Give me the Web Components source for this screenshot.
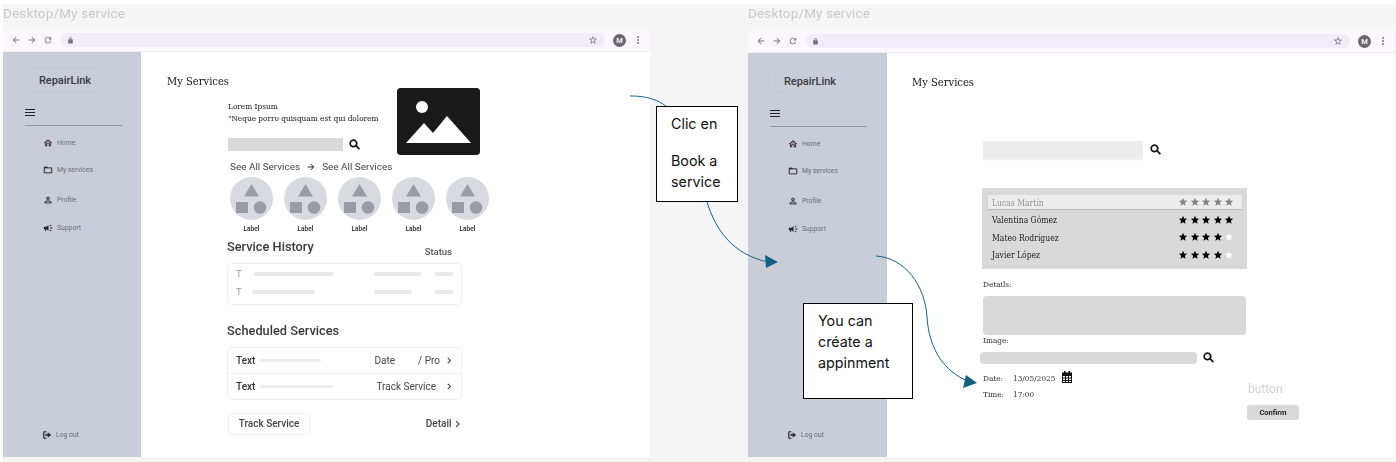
<!DOCTYPE html>
<html lang="en">
<head>
<meta charset="utf-8">
<title>Desktop/My service</title>
<style>
  html { background: #fff; }
  body { margin: 0; height: 462px; overflow: hidden; font-family: Roboto, sans-serif; }
</style>
</head>
<body>
<wire-board>
  <wire-window heading="Desktop/My service" style="--head-h:25px">
    <side-nav slot="nav"></side-nav>
    <services-home></services-home>
  </wire-window>
  <wire-window heading="Desktop/My service" style="--head-h:26px;--nav-w:139px">
    <side-nav slot="nav"></side-nav>
    <services-book></services-book>
  </wire-window>
  <note-box style="left:653px;top:102px;width:80px;height:94px;--pad-l:14px">
    <p style="margin-top:6px">Clic en</p>
    <p style="margin-top:16px">Book a<br>service</p>
  </note-box>
  <note-box style="left:800px;top:299px;width:108px;height:94px;--pad-l:14px">
    <p style="margin-top:6px">You can<br>créate a<br>appinment</p>
  </note-box>
</wire-board>

<script>
const ICONS = {
  search: 'M10 2.500a7.500 7.500 0 1 0 4.400 13.600l5.600 5.600 2.200-2.200-5.600-5.600A7.500 7.500 0 0 0 10 2.500zm0 3a4.500 4.500 0 1 1 0 9 4.500 4.500 0 0 1 0-9z',
  star: 'M12 17.270 18.180 21l-1.640-7.030L22 9.240l-7.190-.61L12 2 9.190 8.630 2 9.240l5.460 4.730L5.820 21z',
  home: 'M12 3 2 12h3v8h5v-5a2 2 0 0 1 4 0v5h5v-8h3zM7 18v-7.200l5-4.500 5 4.500V18h-1v-3a4 4 0 0 0-8 0v3z',
  folder: 'M20 6h-8l-2-2H4c-1.100 0-1.990.9-1.990 2L2 18c0 1.100.9 2 2 2h16c1.100 0 2-.9 2-2V8c0-1.100-.9-2-2-2zm0 12H4V8h16v10z',
  person: 'M12 5.900c1.160 0 2.100.94 2.100 2.100s-.94 2.100-2.100 2.100S9.900 9.160 9.900 8s.94-2.100 2.100-2.100m0 9c2.970 0 6.100 1.460 6.100 2.100v1.100H5.900V17c0-.64 3.130-2.100 6.100-2.100M12 4C9.790 4 8 5.790 8 8s1.790 4 4 4 4-1.790 4-4-1.790-4-4-4zm0 9c-2.670 0-8 1.340-8 4v3h16v-3c0-2.660-5.330-4-8-4z',
  horn: 'M18 11v2h4v-2h-4zm-2 6.610c.96.71 2.210 1.650 3.200 2.390.4-.53.8-1.070 1.200-1.600-.99-.74-2.240-1.680-3.200-2.400-.4.54-.8 1.080-1.200 1.610zM20.400 5.600c-.4-.53-.8-1.070-1.200-1.600-.99.74-2.240 1.680-3.200 2.400.4.53.8 1.070 1.200 1.600.96-.72 2.210-1.650 3.200-2.400zM4 9c-1.100 0-2 .9-2 2v2c0 1.100.9 2 2 2h1v4h2v-4h1l5 3V6L8 9H4z',
  logout: 'M10 3H6a3 3 0 0 0-3 3v12a3 3 0 0 0 3 3h4v-2.400H6.400a1 1 0 0 1-1-1V6.400a1 1 0 0 1 1-1H10zM14 6v4H8v4h6v4l8-6z',
  chevron: 'M9 5.500 7.500 7l5 5-5 5L9 18.500l6.500-6.500z',
  arrow: 'M12 4l-1.410 1.410L16.170 11H4v2h12.170l-5.580 5.590L12 20l8-8z',
  back: 'M20 11H7.830l5.590-5.590L12 4l-8 8 8 8 1.410-1.410L7.830 13H20z',
  reload: 'M17.650 6.350A7.960 7.960 0 0 0 12 4a8 8 0 1 0 7.730 10h-2.080A6 6 0 1 1 12 6c1.660 0 3.140.69 4.220 1.780L13 11h7V4z',
  lock: 'M18 8h-1V6a5 5 0 0 0-10 0v2H6a2 2 0 0 0-2 2v10a2 2 0 0 0 2 2h12a2 2 0 0 0 2-2V10a2 2 0 0 0-2-2zM9 6a3 3 0 0 1 6 0v2H9z',
  starLine: 'M22 9.240l-7.190-.62L12 2 9.190 8.630 2 9.240l5.460 4.730L5.820 21 12 17.270 18.180 21l-1.630-7.030zM12 15.400l-3.760 2.270 1-4.280-3.320-2.880 4.380-.38L12 6.100l1.710 4.040 4.380.38-3.320 2.880 1 4.280z'
}

const SLAB = 'font-family:"DejaVu Serif",serif;font-stretch:condensed'

const icon = (name, size, color = 'currentColor') =>
  `<svg width="${size}" height="${size}" viewBox="0 0 24 24" fill="${color}" style="display:block;flex:none"><path d="${ICONS[name]}"/></svg>`

class ElementBase extends HTMLElement {
  constructor() {
    super()
    this.attachShadow({ mode: 'open' })
  }
  render(html) {
    this.shadowRoot.innerHTML = html
  }
}

class WireBoard extends ElementBase {
  connectedCallback() {
    this.render(`
      <style>
        :host { display: block; position: relative; margin: 4px 0 0 3px; height: 458px; background: #f5f5f5; }
        .windows { display: flex; gap: 98px; }
        svg { position: absolute; left: -3px; top: -4px; pointer-events: none; }
      </style>
      <div class="windows"><slot></slot></div>
      <svg width="1396" height="462" fill="none" stroke="#156082" stroke-width="1">
        <path d="M630 96C652 96 690 100 704 190C713 232 735 255 768 262"/>
        <path d="M876 256C905 258 925 285 927 317C929 350 945 372 968 381"/>
        <path d="M778 262 765 255 766 268z" fill="#156082" stroke="none"/>
        <path d="M977 383 966 375 963 388z" fill="#156082" stroke="none"/>
      </svg>
      <slot name="over"></slot>`)
    // notes lie over the windows, so they move to the named slot
    this.querySelectorAll('note-box').forEach(n => n.slot = 'over')
  }
}

class WireWindow extends ElementBase {
  connectedCallback() {
    this.render(`
      <style>
        :host { display: block; width: 647px; filter: blur(.35px); }
        .head { height: var(--head-h); padding-top: 1px; box-sizing: border-box; font: 13.500px/17px Roboto, sans-serif; color: #c9c9c9; letter-spacing: .15px; }
        .body { display: flex; height: calc(430px - var(--head-h)); background: #fff; }
        .main { flex: 1; min-width: 0; }
      </style>
      <div class="head">${this.getAttribute('heading')}</div>
      <browser-bar></browser-bar>
      <div class="body">
        <slot name="nav"></slot>
        <div class="main"><slot></slot></div>
      </div>`)
  }
}

class BrowserBar extends ElementBase {
  connectedCallback() {
    this.render(`
      <style>
        :host { display: flex; align-items: center; height: 23px; box-sizing: border-box; padding-left: 8px; background: #fcf6fd; border-bottom: 1px solid #efecef; color: #77737b; }
        .nav { display: flex; gap: 6px; }
        .url { display: flex; align-items: center; width: 544px; height: 14px; margin-left: 8px; padding-left: 6px; box-sizing: border-box; background: #f1ecf8; border-radius: 7px; }
        .url svg:last-child { margin-left: auto; margin-right: 7px; }
        .me { width: 13px; height: 13px; margin-left: 8px; border-radius: 50%; background: #6b6670; color: #fff; font: 500 7.500px/13px Roboto, sans-serif; text-align: center; }
        .dots { display: grid; gap: 1px; margin-left: 11px; }
        .dots i { width: 2px; height: 2px; border-radius: 50%; background: #77737b; }
      </style>
      <div class="nav">${icon('back', 10)}${icon('arrow', 10)}${icon('reload', 10)}</div>
      <div class="url">${icon('lock', 7)}${icon('starLine', 10)}</div>
      <div class="me">M</div>
      <div class="dots"><i></i><i></i><i></i></div>`)
  }
}

class SideNav extends ElementBase {
  connectedCallback() {
    const item = (ic, label, top, left = 40, color = '#2c2c30') =>
      `<div class="item" style="margin-top:${top}px;padding-left:${left}px">${icon(ic, 10, color)}<span>${label}</span></div>`
    this.render(`
      <style>
        :host { display: flex; flex-direction: column; flex: none; width: var(--nav-w, 138px); height: 100%; background: #c8cdd7; color: #6a6d75; }
        .brand { width: 70px; height: 25px; margin: 16px 0 0 27px; box-sizing: border-box; border: 1px solid #c5cad4; border-radius: 5px; font: 500 11px/23px Roboto, sans-serif; color: #383b41; text-align: center; }
        .burger { display: grid; gap: 2px; width: 10px; margin: 16px 0 0 22px; }
        .burger i { height: 1px; background: #222; }
        hr { width: 97px; margin: 9px 0 0 22px; border: 0; border-top: 1px solid #9499a2; }
        .item { display: flex; align-items: center; gap: 4px; height: 12px; font: 6.800px/12px Roboto, sans-serif; }
        svg { stroke: currentColor; stroke-width: .4; color: #2c2c30; }
      </style>
      <div class="brand">RepairLink</div>
      <div class="burger"><i></i><i></i><i></i></div>
      <hr>
      ${item('home', 'Home', 11, 40, '#4a3035')}
      ${item('folder', 'My services', 15)}
      ${item('person', 'Profile', 18)}
      ${item('horn', 'Support', 16)}
      <div style="margin-top:auto;margin-bottom:16px">${item('logout', 'Log out', 0, 39)}</div>`)
  }
}

class ShapeTile extends ElementBase {
  connectedCallback() {
    this.render(`
      <style>
        :host { display: block; width: 43px; }
        svg { display: block; }
        div { margin-top: 4px; font: 500 6.500px/10px Roboto, sans-serif; color: #222; text-align: center; }
      </style>
      <svg width="43" height="43" viewBox="0 0 43 43">
        <circle cx="21.500" cy="21.500" r="21.500" fill="#d9dadf"/>
        <path d="M21.500 7 29 19.500H14z" fill="#989da5"/>
        <rect x="6" y="25" width="12" height="11" fill="#989da5"/>
        <circle cx="30" cy="30.500" r="6.300" fill="#989da5"/>
      </svg>
      <div>Label</div>`)
  }
}

class HistoryRow extends ElementBase {
  connectedCallback() {
    const [gap, a, b] = this.getAttribute('bars').split(',')
    this.render(`
      <style>
        :host { display: grid; grid-template-columns: 138px 61px 18px; align-items: center; height: 18px; padding-left: 8px; }
        .t { font: 9.500px/18px Roboto, sans-serif; color: #9a9a9a; display: flex; align-items: center; }
        i { display: block; height: 4px; border-radius: 2px; background: #e8e8e8; }
      </style>
      <div class="t"><span style="width:${gap}px">T</span><i style="width:${a}px"></i></div>
      <i style="width:${b}px"></i>
      <i></i>`)
  }
}

class ScheduledRow extends ElementBase {
  connectedCallback() {
    this.render(`
      <style>
        :host { display: flex; align-items: center; height: 25px; padding: 0 6px 0 8px; font: 10px/14px Roboto, sans-serif; color: #444; }
        :host(:not(:last-child)) { border-bottom: 1px solid #f1f1f1; }
        i { display: block; height: 3px; margin-left: 5px; border-radius: 2px; background: #ececec; }
        .end { margin-left: auto; display: flex; align-items: center; }
      </style>
      <span style="color:#333;font-weight:500">Text</span>
      <i style="width:${this.getAttribute('bar')}px"></i>
      <div class="end"><slot></slot>${icon('chevron', 11, '#333')}</div>`)
  }
}

class ListCard extends ElementBase {
  connectedCallback() {
    this.render(`
      <style>
        :host { display: block; box-sizing: border-box; width: 235px; border: 1px solid #f0f0f0; border-radius: 5px; padding: var(--pad, 0); }
      </style>
      <slot></slot>`)
  }
}

class ScreenTitle extends ElementBase {
  connectedCallback() {
    this.render(`
      <style>
        :host { display: block; margin: 23px 0 0 26px; font-size: 11.100px; line-height: 13px; ${SLAB}; color: #111; }
      </style>
      <slot></slot>`)
  }
}

class ServicesHome extends ElementBase {
  connectedCallback() {
    this.render(`
      <style>
        :host { display: block; }
        .content { padding-left: 86px; }
        .hero { display: flex; margin-left: 1px; }
        .copy { width: 169px; padding-top: 12px; box-sizing: border-box; font-size: 8.200px; line-height: 12px; ${SLAB}; color: #111; white-space: nowrap; }
        .find { display: flex; align-items: center; gap: 5px; margin-top: 14px; }
        .find i { width: 115px; height: 13px; background: #d9d9d9; }
        .pic { display: block; border-radius: 3px; }
        .see { display: flex; align-items: center; gap: 6px; height: 14px; margin: 5px 0 0 3px; font: 9.950px/14px Roboto, sans-serif; color: #444; }
        .tiles { display: flex; gap: 11px; margin: 3px 0 0 3px; }
        h2 { margin: 0; font: 500 12.800px/16px Roboto, sans-serif; color: #3a3a3a; }
        .hist { display: flex; justify-content: space-between; width: 225px; height: 18px; margin-top: 5px; }
        .hist span { margin-top: 7px; font: 500 9.500px/12px Roboto, sans-serif; color: #555; }
        .gap { margin-top: 6px; --pad: 1px 0 3px; }
        .foot { display: flex; justify-content: space-between; align-items: center; width: 235.500px; margin: 13px 0 0 1px; font: 500 10px/14px Roboto, sans-serif; color: #444; }
        .foot .btn { width: 82px; height: 22px; box-sizing: border-box; border: 1px solid #f0f0f0; border-radius: 5px; line-height: 20px; text-align: center; }
        .foot .more { display: flex; align-items: center; }
      </style>
      <screen-title>My Services</screen-title>
      <div class="content">
        <div class="hero">
          <div class="copy">
            Lorem Ipsum<br>"Neque porro quisquam est qui dolorem
            <div class="find"><i></i>${icon('search', 13, '#111')}</div>
          </div>
          <svg class="pic" width="83" height="67" viewBox="0 0 83 67">
            <rect width="83" height="67" rx="3" fill="#1a1a1a"/>
            <circle cx="25" cy="19" r="6" fill="#fff"/>
            <path d="M9 55 27 35 36 45 50 28 74 55z" fill="#fff"/>
          </svg>
        </div>
        <div class="see">See All Services ${icon('arrow', 10, '#333')} See All Services</div>
        <div class="tiles">
          <shape-tile></shape-tile><shape-tile></shape-tile><shape-tile></shape-tile><shape-tile></shape-tile><shape-tile></shape-tile>
        </div>
        <div class="hist"><h2>Service History</h2><span>Status</span></div>
        <list-card class="gap">
          <history-row bars="18,80,47"></history-row>
          <history-row bars="16,63,38"></history-row>
        </list-card>
        <h2 style="margin-top:18px">Scheduled Services</h2>
        <list-card style="margin-top:8px">
          <scheduled-row bar="61"><span style="margin-right:23px">Date</span><span>/ Pro</span><span style="width:4px"></span></scheduled-row>
          <scheduled-row bar="73"><span style="margin-right:8px">Track Service</span></scheduled-row>
        </list-card>
        <div class="foot">
          <div class="btn">Track Service</div>
          <div class="more">Detail ${icon('chevron', 12, '#333')}</div>
        </div>
      </div>`)
  }
}

class RatingRow extends ElementBase {
  connectedCallback() {
    const n = +this.getAttribute('stars')
    const on = this.hasAttribute('selected') ? '#868686' : '#000'
    let stars = ''
    for (let i = 0; i < 5; i++)
      stars += icon('star', 10, i < n ? on : '#fff')
    this.render(`
      <style>
        :host { display: flex; align-items: center; justify-content: space-between; height: 14px; padding: 0 8px 0 4px; box-sizing: border-box; font-size: 8.500px; line-height: 14px; ${SLAB}; color: #222; }
        :host([selected]) { background: #ececec; color: #949494; box-shadow: 0 1px 1px #0002; }
        span { padding-top: 1px; }
        div { display: flex; gap: 1.500px; }
      </style>
      <span><slot></slot></span>
      <div>${stars}</div>`)
  }
}

class ServicesBook extends ElementBase {
  connectedCallback() {
    this.render(`
      <style>
        :host { display: block; }
        .content { padding-left: 95px; font-size: 8.200px; line-height: 10px; ${SLAB}; color: #333; }
        .find { display: flex; align-items: center; gap: 6px; margin: 52px 0 0 1px; }
        .find svg { margin-top: -2px; }
        .find i { width: 160px; height: 18px; background: #ececec; box-shadow: 0 1px 1px #0000000d; }
        .panel { display: grid; gap: 3.500px; width: 265px; height: 81px; padding: 7px 5px 0 6px; box-sizing: border-box; margin-top: 29px; background: #d9d9d9; align-content: start; }
        .lab { margin-left: 1px; }
        .box { width: 263px; height: 39px; margin: 7px 0 0 1px; border-radius: 4px; background: #d9d9d9; }
        .upload { display: flex; align-items: center; gap: 5px; margin: 6px 0 0 -2px; }
        .upload i { width: 217px; height: 12px; border-radius: 4px; background: #d9d9d9; }
        .bottom { display: flex; margin-top: 8px; }
        .when { width: 265px; padding-left: 1px; box-sizing: border-box; line-height: 12px; }
        .when div { display: flex; align-items: center; height: 12px; }
        .when span { width: 30px; }
        .when svg { margin-left: 7px; margin-top: -2px; }
        .act { margin-top: 10px; }
        .act p { margin: 0; font: 12px/14px Roboto, sans-serif; color: #d2d2d2; padding-left: 1px; }
        .act div { width: 52px; height: 15px; margin-top: 9px; border-radius: 3px; background: #d9d9d9; font: 700 7.500px/15px Roboto, sans-serif; color: #222; text-align: center; }
      </style>
      <screen-title style="margin-left:25px">My Services</screen-title>
      <div class="content">
        <div class="find"><i></i>${icon('search', 13, '#111')}</div>
        <div class="panel">
          <rating-row stars="5" selected>Lucas Martín</rating-row>
          <rating-row stars="5">Valentina Gómez</rating-row>
          <rating-row stars="4">Mateo Rodríguez</rating-row>
          <rating-row stars="4">Javier López</rating-row>
        </div>
        <div class="lab" style="margin-top:10px">Details:</div>
        <div class="box"></div>
        <div class="lab">Image:</div>
        <div class="upload"><i></i>${icon('search', 13, '#111')}</div>
        <div class="bottom">
          <div class="when">
            <div><span>Date:</span>13/05/2025<svg width="10" height="12" viewBox="0 0 10 12"><path fill-rule="evenodd" d="M2 0h1.500v1.500h3V0H8v1.500h2V12H0V1.500h2zM1 5v1.500h2V5zM4 5v1.500h2V5zM7 5v1.500h2V5zM1 7.500V9h2V7.500zM4 7.500V9h2V7.500zM7 7.500V9h2V7.500zM1 10v1h2v-1zM4 10v1h2v-1zM7 10v1h2v-1z" fill="#111"/></svg></div>
            <div style="margin-top:4px"><span>Time:</span>17:00</div>
          </div>
          <div class="act"><p>button</p><div>Confirm</div></div>
        </div>
      </div>`)
  }
}

class NoteBox extends ElementBase {
  connectedCallback() {
    this.render(`
      <style>
        :host { position: absolute; display: block; background: #fff; border: 1px solid #000; font: 14.300px/21px Inter, sans-serif; color: #111; }
        .in { padding-left: var(--pad-l); }
        ::slotted(p) { margin: 0; }
      </style>
      <div class="in"><slot></slot></div>`)
  }
}

customElements.define('wire-board', WireBoard)
customElements.define('wire-window', WireWindow)
customElements.define('browser-bar', BrowserBar)
customElements.define('side-nav', SideNav)
customElements.define('shape-tile', ShapeTile)
customElements.define('history-row', HistoryRow)
customElements.define('scheduled-row', ScheduledRow)
customElements.define('list-card', ListCard)
customElements.define('screen-title', ScreenTitle)
customElements.define('services-home', ServicesHome)
customElements.define('rating-row', RatingRow)
customElements.define('services-book', ServicesBook)
customElements.define('note-box', NoteBox)
</script>
</body>
</html>
